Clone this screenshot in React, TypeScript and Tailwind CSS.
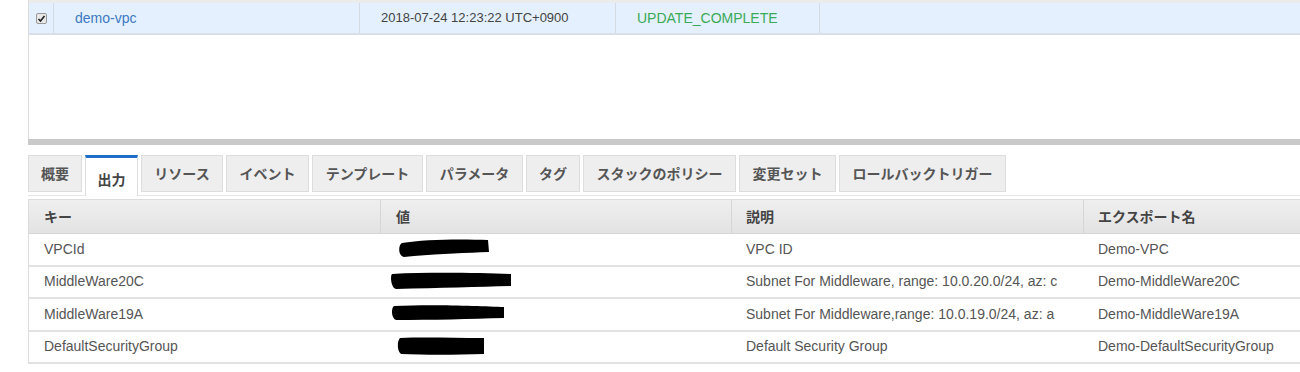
import React from "react";

const tabs = ["概要", "出力", "リソース", "イベント", "テンプレート", "パラメータ", "タグ", "スタックのポリシー", "変更セット", "ロールバックトリガー"];
const tabW = [54, 53, 82, 83, 111, 97, 54, 153, 97, 167];

const rows = [
  { k: "VPCId", d: "VPC ID", e: "Demo-VPC", blob: "M8 6 C30 2 70 2 94 3 L95 15 C70 16 40 17 10 20 C4 19 4 8 8 6 Z" },
  { k: "MiddleWare20C", d: "Subnet For Middleware, range: 10.0.20.0/24, az: c", e: "Demo-MiddleWare20C", blob: "M2 4 C40 2 90 3 121 4 L121 16 C90 17 50 18 6 19 C1 18 0 6 2 4 Z" },
  { k: "MiddleWare19A", d: "Subnet For Middleware,range: 10.0.19.0/24, az: a", e: "Demo-MiddleWare19A", blob: "M3 4 C40 2 90 4 113 5 L113 16 C80 17 40 18 5 18 C0 16 0 6 3 4 Z" },
  { k: "DefaultSecurityGroup", d: "Default Security Group", e: "Demo-DefaultSecurityGroup", blob: "M6 3 C30 2 60 3 90 3 L90 19 C60 20 30 20 7 19 C3 16 3 6 6 3 Z" },
];

const blobX = [394, 390, 391, 394];

export default function App() {
  const sans = { fontFamily: '"Liberation Sans", Arial, "Noto Sans CJK JP", sans-serif' };
  const jp = { fontFamily: '"Noto Sans CJK JP", sans-serif' };
  return (
    <div className="w-[1300px] h-[372px] bg-white overflow-hidden text-[14px]" style={sans}>
      <div className="ml-[28px] border-l border-[#dcdcdc] h-[139px] flex flex-col">
        <div className="h-[3px] bg-[#ebebeb]" />
        <div className="h-[32px] bg-[#e4f0fd] border-b-[2px] border-[#d9dfe6] flex items-center">
          <div className="w-[25px] h-full border-r border-[#d5dbe3] flex items-center justify-center">
            <svg width="11" height="11" viewBox="0 0 11 11">
              <rect x="0.5" y="0.5" width="10" height="10" rx="1.5" fill="#e8e8e8" stroke="#9a9a9a" />
              <path d="M2.5 6 L4.5 8 L8.5 3" stroke="#222" strokeWidth="1.6" fill="none" />
            </svg>
          </div>
          <div className="w-[306px] h-full border-r border-[#d5dbe3] flex items-center pl-[21px] text-[#3d78c4]">demo-vpc</div>
          <div className="w-[256px] h-full border-r border-[#d5dbe3] flex items-center pl-[21px] text-[#444] text-[13px]">2018-07-24 12:23:22 UTC+0900</div>
          <div className="w-[204px] h-full border-r border-[#d5dbe3] flex items-center pl-[21px] text-[#3aaa5a]">UPDATE_COMPLETE</div>
          <div className="flex-1" />
        </div>
        <div className="flex-1" />
      </div>
      <div className="ml-[28px] h-[6px] bg-[#c9c9c9]" />
      <div className="ml-[28px] mt-[10px] flex items-start gap-[3px] h-[41px] border-b border-[#e6e6e6]" style={jp}>
        {tabs.map((t, i) => {
          const active = i === 1;
          return (
            <div
              key={t}
              className={
                active
                  ? "h-[41px] bg-white border-t-[3px] border-[#1f6ec8] border-x border-x-[#dddddd] flex items-center justify-center text-[14px] font-semibold text-[#444] pt-[4px]"
                  : "h-[37px] bg-[#eeeeee] border border-[#dddddd] flex items-center justify-center text-[14px] font-semibold text-[#555]"
              }
              style={{ width: tabW[i] }}
            >
              {t}
            </div>
          );
        })}
      </div>
      <div className="ml-[28px] mt-[3px] border-l border-t border-[#dddddd]">
        <div className="flex h-[34px] bg-gradient-to-b from-[#efefef] to-[#e3e3e3] border-b border-[#d6d6d6] text-[#444] font-semibold text-[14px]" style={jp}>
          <div className="w-[352px] border-r border-[#d6d6d6] flex items-center pl-[15px]">キー</div>
          <div className="w-[351px] border-r border-[#d6d6d6] flex items-center pl-[15px]">値</div>
          <div className="w-[352px] border-r border-[#d6d6d6] flex items-center pl-[14px]">説明</div>
          <div className="flex-1 flex items-center pl-[14px]">エクスポート名</div>
        </div>
        {rows.map((r, i) => (
          <div key={r.k} className="flex h-[32.5px] border-b-[2px] border-[#e2e2e2] text-[#555] text-[14px]">
            <div className="w-[352px] flex items-center pl-[15px]">{r.k}</div>
            <div className="w-[351px] flex items-center">
              <svg width="130" height="24" viewBox="0 0 130 24" style={{ marginLeft: blobX[i] - 381 }}>
                <path d={r.blob} fill="#000" />
              </svg>
            </div>
            <div className="w-[352px] flex items-center pl-[14px]">{r.d}</div>
            <div className="flex-1 flex items-center pl-[14px]">{r.e}</div>
          </div>
        ))}
      </div>
    </div>
  );
}
